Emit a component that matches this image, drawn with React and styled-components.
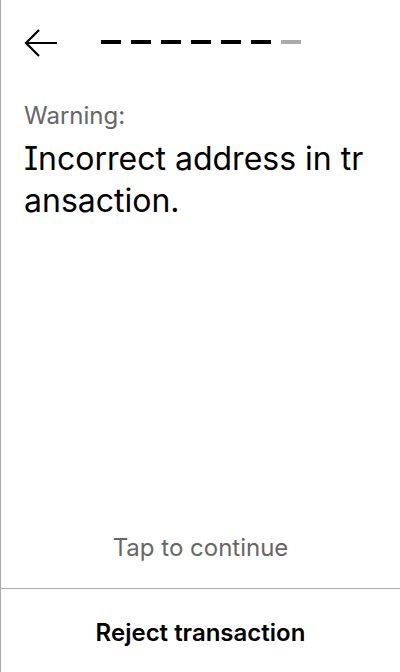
import React from "react";
import styled, { createGlobalStyle } from "styled-components";

const Global = createGlobalStyle`
  html, body { margin: 0; padding: 0; background: #fff; }
  * { box-sizing: border-box; }
`;

const Screen = styled.div`
  width: 400px;
  height: 672px;
  border-left: 1px solid #aaaaaa;
  display: flex;
  flex-direction: column;
  font-family: Inter, "Noto Sans", sans-serif;
  color: #000;
  background: #fff;
  overflow: hidden;
`;

const Header = styled.div`
  display: flex;
  align-items: center;
  height: 30px;
  margin-top: 28px;
  padding-left: 23px;
`;

const BackButton = styled.button`
  border: 0;
  padding: 0;
  margin: 0;
  background: none;
  width: 34px;
  height: 30px;
  display: block;
  cursor: pointer;
`;

const Progress = styled.div`
  display: flex;
  gap: 10px;
  margin-left: 43px;
  margin-top: -2px;
`;

const Dash = styled.div`
  width: 20px;
  height: 4px;
  background: ${(p) => (p.$done ? "#000" : "#aaaaaa")};
`;

const Content = styled.div`
  flex: 1;
  padding: 43px 24px 0 23px;
`;

const Label = styled.div`
  font-size: 24px;
  line-height: 29px;
  color: #666666;
`;

const Title = styled.div`
  margin-top: 8px;
  font-size: 32px;
  line-height: 42px;
  word-break: break-all;
  font-feature-settings: "cv08" 1;
`;

const Hint = styled.div`
  text-align: center;
  font-size: 24px;
  line-height: 29px;
  color: #666666;
  padding-bottom: 26px;
`;

const Footer = styled.button`
  height: 84px;
  border: 0;
  border-top: 1px solid #aaaaaa;
  background: #fff;
  font-family: Inter, "Noto Sans", sans-serif;
  font-size: 24px;
  line-height: 29px;
  font-weight: 600;
  color: #000;
  cursor: pointer;
  padding: 3px 0 0;
`;

const steps = [1, 1, 1, 1, 1, 1, 0];

export default function App() {
  return (
    <>
      <Global />
      <Screen>
        <Header>
          <BackButton aria-label="Back">
            <svg width="34" height="30" viewBox="0 0 34 30" fill="none">
              <path d="M2 15H33M15 2L2 15L15 28" stroke="#000" strokeWidth="2.2" />
            </svg>
          </BackButton>
          <Progress>
            {steps.map((s, i) => (
              <Dash key={i} $done={!!s} />
            ))}
          </Progress>
        </Header>
        <Content>
          <Label>Warning:</Label>
          <Title>Incorrect address in transaction.</Title>
        </Content>
        <Hint>Tap to continue</Hint>
        <Footer>Reject transaction</Footer>
      </Screen>
    </>
  );
}
